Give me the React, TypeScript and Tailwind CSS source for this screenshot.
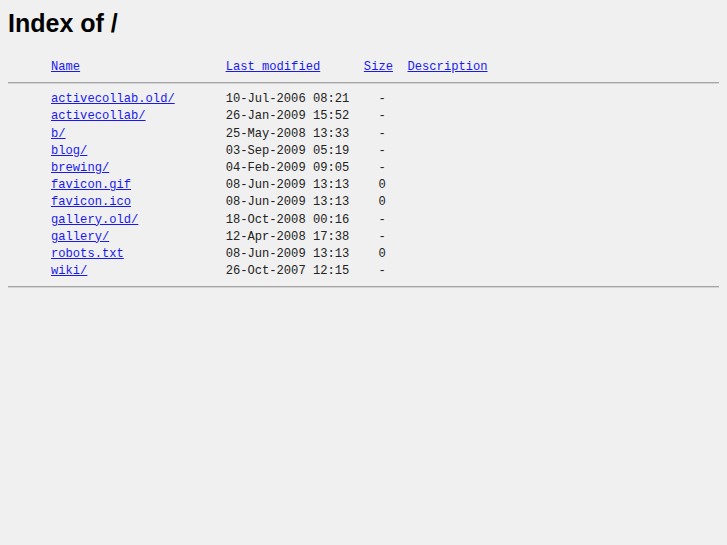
import React from 'react';

type Entry = { name: string; modified: string; size: string };

const entries: Entry[] = [
  { name: 'activecollab.old/', modified: '10-Jul-2006 08:21', size: '-' },
  { name: 'activecollab/', modified: '26-Jan-2009 15:52', size: '-' },
  { name: 'b/', modified: '25-May-2008 13:33', size: '-' },
  { name: 'blog/', modified: '03-Sep-2009 05:19', size: '-' },
  { name: 'brewing/', modified: '04-Feb-2009 09:05', size: '-' },
  { name: 'favicon.gif', modified: '08-Jun-2009 13:13', size: '0' },
  { name: 'favicon.ico', modified: '08-Jun-2009 13:13', size: '0' },
  { name: 'gallery.old/', modified: '18-Oct-2008 00:16', size: '-' },
  { name: 'gallery/', modified: '12-Apr-2008 17:38', size: '-' },
  { name: 'robots.txt', modified: '08-Jun-2009 13:13', size: '0' },
  { name: 'wiki/', modified: '26-Oct-2007 12:15', size: '-' },
];

const Rule: React.FC = () => (
  <div className="my-[6px] h-0 border-t border-b border-t-[#a6a6a6] border-b-[#d4d4d4]" />
);

const Link: React.FC<{ children: React.ReactNode }> = ({ children }) => (
  <a href="#" className="text-[#1a1aee] underline">
    {children}
  </a>
);

const Row: React.FC<{ cells: React.ReactNode[] }> = ({ cells }) => (
  <div className="grid grid-cols-[24ch_19ch_6ch_1fr] pl-[43px] whitespace-pre">
    {cells.map((c, i) => (
      <div key={i}>{c}</div>
    ))}
  </div>
);

export default function App() {
  return (
    <div className="min-h-screen bg-[#f0f0f0] px-2 pt-[9px] text-[#222]">
      <h1 className="text-[25px] leading-[29px] font-bold text-black font-['Liberation_Sans',Arial,sans-serif]">
        Index of /
      </h1>

      <div className="mt-[21px] font-['Liberation_Mono','Courier_New',monospace] text-[12.13px] leading-[17.2px]">
        <Row
          cells={[
            <Link>Name</Link>,
            <Link>Last modified</Link>,
            <Link>Size</Link>,
            <Link>Description</Link>,
          ]}
        />
        <div className="mt-[6px] mb-[7px] h-0 border-t border-b border-t-[#a6a6a6] border-b-[#d4d4d4]" />
        {entries.map((e) => (
          <Row
            key={e.name}
            cells={[<Link>{e.name}</Link>, e.modified, `  ${e.size}`, '']}
          />
        ))}
        <Rule />
      </div>
    </div>
  );
}
